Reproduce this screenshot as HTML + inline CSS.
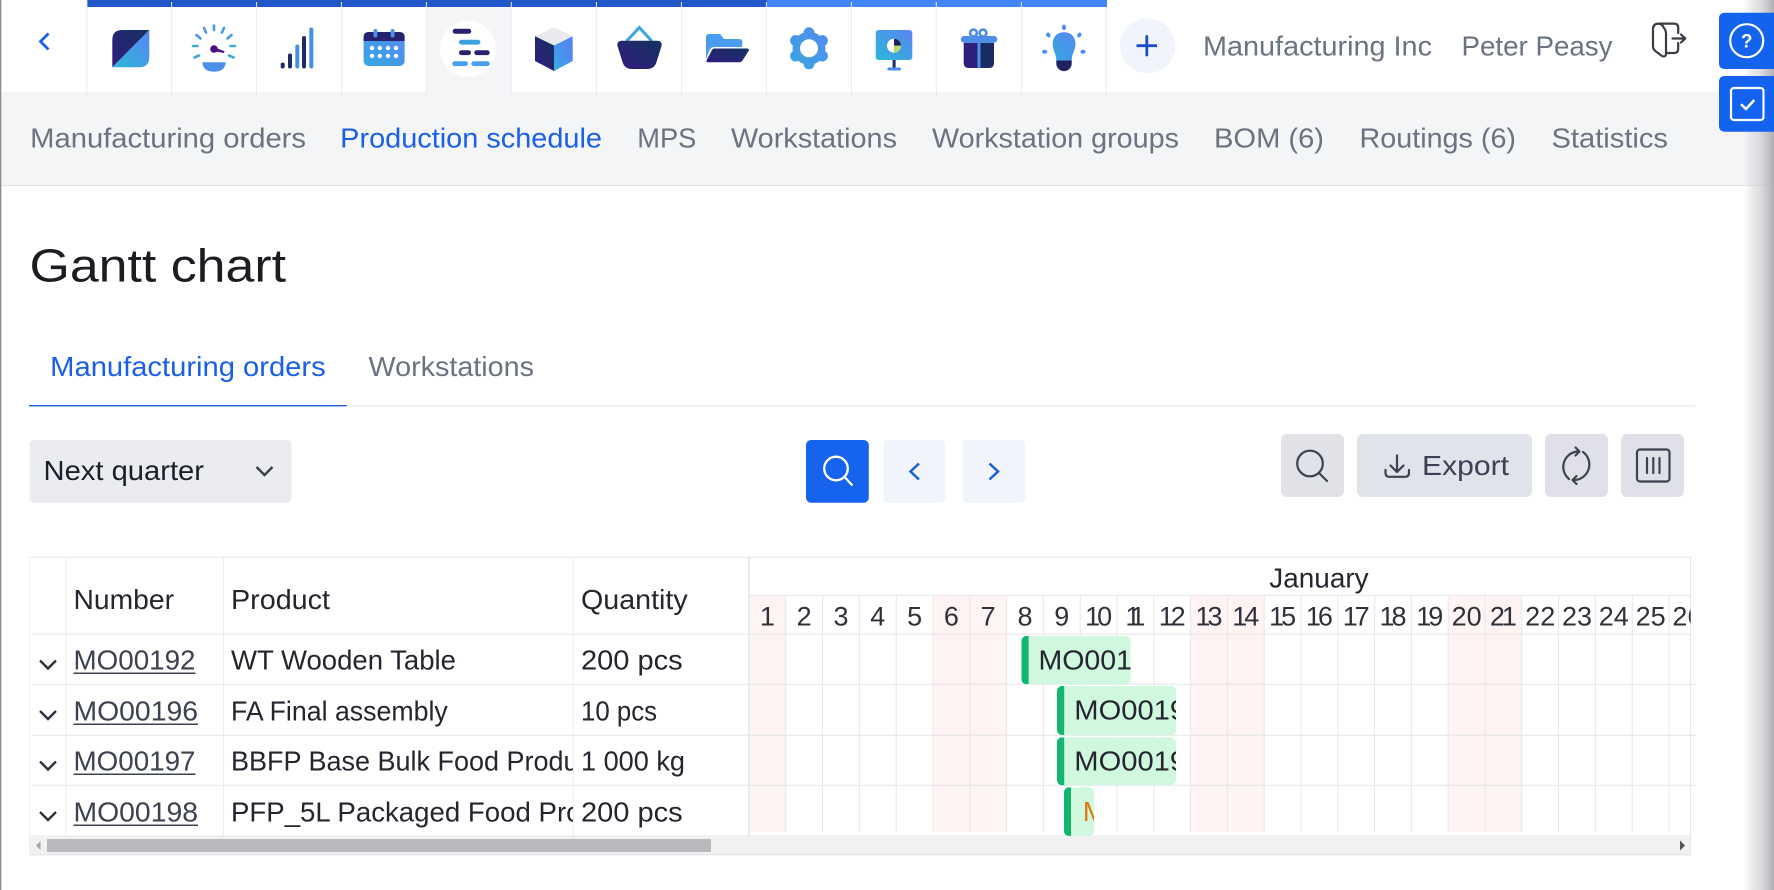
<!DOCTYPE html>
<html lang="en">
<head>
<meta charset="utf-8">
<title>Gantt chart</title>
<style>
html,body{margin:0;padding:0;background:#fff;overflow:hidden}
svg{display:block}
text{font-family:"Liberation Sans",sans-serif;font-size:28px;fill:#23262f}
.n{fill:#6b7280}
.b{fill:#1a5fe8}
.d{text-anchor:middle;font-size:27px;fill:#2e303a}
.l{fill:#3d4150}
</style>
</head>
<body>
<svg xmlns="http://www.w3.org/2000/svg" width="1774" height="890" viewBox="0 0 1774 890">
<defs>
<linearGradient id="g" x1="0" y1="1" x2="1" y2="0"><stop offset="0" stop-color="#2bb8d8"/><stop offset="1" stop-color="#5a84f4"/></linearGradient>
<linearGradient id="g2" x1="0" y1="1" x2="1" y2="0"><stop offset="0" stop-color="#35a8e0"/><stop offset="1" stop-color="#5788f0"/></linearGradient>
<linearGradient id="cube" x1="0" y1="1" x2="1" y2="0"><stop offset="0" stop-color="#34aee0"/><stop offset="0.6" stop-color="#4f8cf0"/><stop offset="1" stop-color="#5880f2"/></linearGradient>
<linearGradient id="gear" gradientUnits="userSpaceOnUse" x1="790" y1="69" x2="828" y2="27"><stop offset="0" stop-color="#35a8e0"/><stop offset="1" stop-color="#5788f0"/></linearGradient>
<linearGradient id="nv" x1="0" y1="1" x2="1" y2="0"><stop offset="0" stop-color="#331c80"/><stop offset="1" stop-color="#12325f"/></linearGradient>
<linearGradient id="sh" x1="0" y1="0" x2="1" y2="0"><stop offset="0" stop-color="#b0b0b4" stop-opacity="0"/><stop offset="0.5" stop-color="#c8c8cb" stop-opacity=".55"/><stop offset="1" stop-color="#aeaeb2"/></linearGradient>
<clipPath id="cProd"><rect x="224" y="634" width="349" height="202"/></clipPath>
<clipPath id="cDays"><rect x="749" y="596" width="941.6" height="38"/></clipPath>
<clipPath id="b1"><rect x="1021.4" y="636" width="109.2" height="48.3" rx="5"/></clipPath>
<clipPath id="b2"><rect x="1057" y="686" width="119" height="49" rx="5"/></clipPath>
<clipPath id="b3"><rect x="1057" y="737.3" width="119" height="48" rx="5"/></clipPath>
<clipPath id="b4"><rect x="1064" y="787.3" width="30" height="48.7" rx="5"/></clipPath>
</defs>

<!-- Page -->
<rect width="1774" height="890" fill="#fff"/>

<!-- Sub-nav background -->
<rect x="0" y="92" width="1774" height="93" fill="#f4f5f7"/>
<rect x="0" y="185" width="1774" height="1" fill="#e6e7ea"/>

<!-- Active tab bg -->
<rect x="426.5" y="7" width="85" height="85" fill="#f4f5f7"/>

<!-- Top colored bars -->
<rect x="87" y="0" width="680" height="7" fill="#2157c8"/>
<rect x="767" y="0" width="340" height="7" fill="#4285f6"/>

<!-- Tab separators -->
<path d="M86.9 0V96M171.6 2V96M256.6 2V96M341.4 2V96M426.4 2V96M511.3 2V96M596.4 2V96M681.4 2V96M766.4 2V96M851.4 2V96M936.3 2V96M1021.3 2V96M1106.3 7V96" stroke="#eaebee" stroke-width="1" fill="none"/>

<!-- Back chevron -->
<path d="M48.5 33.500L40.500 41.500L48.500 49.500" fill="none" stroke="#1a5fe8" stroke-width="2.800"/>

<!-- Icon 1 -->
<path d="M112.3 67.3V40Q112.3 30 122.3 30H149.3L112.3 67.3Z" fill="url(#nv)"/>
<path d="M112.3 67.3L149.3 30V57Q149.3 67.3 139 67.3Z" fill="url(#g)"/>

<!-- Icon 2 gauge -->
<g stroke-width="2.600" stroke-linecap="round" fill="none">
<path d="M214 25.500V30M204 28L206 32.500M224 28L222 32.500M196.500 35L200.500 38.500M231.500 35L227.500 38.500" stroke="#4a9ae8"/>
<path d="M193 46H197.500M235 46H230.500M194.500 57.500L199 55.500M233.500 57.500L229 55.500" stroke="#3eaad8"/>
</g>
<circle cx="214" cy="49" r="3.800" fill="#4a0f85"/>
<path d="M214 47.300L224.500 51.300L224 53L213.500 51Z" fill="#4a0f85"/>
<path d="M202.300 62.300H225.700Q225 71.700 214 71.700Q203 71.700 202.300 62.300Z" fill="#4a8fe8"/>

<!-- Icon 3 bars -->
<g stroke-width="4" stroke-linecap="round" fill="none">
<path d="M282.700 64.500V66.500M290 55.500V66.500M304 38V66.500" stroke="#1f2a66"/>
<path d="M297.300 46.500V66.500M311.300 29.500V66.500" stroke="#4391e4"/>
</g>

<!-- Icon 4 calendar -->
<rect x="363.600" y="32" width="41" height="34" rx="5" fill="url(#g2)"/>
<path d="M363.600 41V37Q363.600 32 368.600 32H399.600Q404.600 32 404.600 37V41Z" fill="#27226e"/>
<rect x="373.400" y="29" width="4" height="8.500" rx="2" fill="#4a90e8"/>
<rect x="390.600" y="29" width="4" height="8.500" rx="2" fill="#4a90e8"/>
<g fill="#fff">
<circle cx="372" cy="48" r="2.200"/><circle cx="379.800" cy="48" r="2.200"/><circle cx="388" cy="48" r="2.200"/><circle cx="396" cy="48" r="2.200"/>
<circle cx="372" cy="56" r="2.200"/><circle cx="379.800" cy="56" r="2.200"/><circle cx="388" cy="56" r="2.200"/><circle cx="396" cy="56" r="2.200"/>
</g>

<!-- Icon 5 (active) -->
<circle cx="468" cy="48.700" r="28" fill="#fff"/>
<rect x="452.700" y="28.700" width="18.500" height="5" rx="2.500" fill="#27226e"/>
<rect x="459" y="39.800" width="21.400" height="4.800" rx="2.400" fill="#3ba2e0"/>
<rect x="459" y="50.300" width="12" height="4.800" rx="2.400" fill="#27226e"/>
<rect x="474.300" y="50.300" width="15.400" height="4.800" rx="2.400" fill="#27226e"/>
<rect x="452.300" y="61.300" width="15.700" height="4.800" rx="2.400" fill="#4aa0ee"/>
<rect x="471.300" y="61.300" width="18.400" height="4.800" rx="2.400" fill="#4aa0ee"/>

<!-- Icon 6 cube -->
<path d="M554 27.300L572.700 36.300L554 45.500L535 36.300Z" fill="#e9eaee"/>
<path d="M535 36.300L554 45.500V71L535 61Z" fill="url(#nv)"/>
<path d="M554 45.500L572.700 36.300V61L554 71Z" fill="url(#cube)"/>

<!-- Icon 7 basket -->
<path d="M626.700 41L639.300 27.500L651.700 41" fill="none" stroke="#3ca4e0" stroke-width="3"/>
<path d="M622 40.700H657Q662.500 40.700 661.500 46L656.500 62Q654.500 69 647 69H632Q624.500 69 622.500 62L617.500 46Q616.500 40.700 622 40.700Z" fill="url(#nv)"/>

<!-- Icon 8 folder -->
<path d="M706 37Q706 34 709 34H720L724 39H739Q742.300 39 742.300 42V47H714Q711 47 709.500 50L706 59Z" fill="#4a9cee"/>
<path d="M714 48.500H747Q749.800 48.500 748.500 51L742.500 60.500Q741.300 62.300 739 62.300H708Q705.700 62.300 706.700 60L712 50Q712.800 48.500 714 48.500Z" fill="url(#nv)"/>

<!-- Icon 9 gear -->
<g fill="url(#gear)">
<circle cx="809" cy="48.300" r="16.500"/>
<circle cx="809" cy="32.800" r="5.500"/>
<circle cx="809" cy="63.800" r="5.500"/>
<circle cx="795.600" cy="40.600" r="5.500"/>
<circle cx="822.400" cy="40.600" r="5.500"/>
<circle cx="795.600" cy="56" r="5.500"/>
<circle cx="822.400" cy="56" r="5.500"/>
</g>
<circle cx="809" cy="48.300" r="9" fill="#fff"/>

<!-- Icon 10 presentation -->
<rect x="875.700" y="30" width="36.600" height="30" rx="3" fill="url(#g)"/>
<circle cx="894" cy="45.700" r="7" fill="#fff"/>
<path d="M894 45.700V38.700A7 7 0 0 1 901 45.700Z" fill="#1a2458"/>
<path d="M894 45.700H901A7 7 0 0 1 894 52.700Z" fill="#b8dc6c"/>
<rect x="892.600" y="60" width="3" height="8" fill="#1d2a66"/>
<rect x="887.300" y="67.500" width="13.700" height="3" rx="1.500" fill="#4a90e8"/>

<!-- Icon 11 gift -->
<circle cx="973.500" cy="33" r="3.400" fill="none" stroke="#4f8ee8" stroke-width="2.600"/>
<circle cx="983" cy="33" r="3.400" fill="none" stroke="#4f8ee8" stroke-width="2.600"/>
<path d="M963.700 42.700H978V68H969Q963.700 68 963.700 63Z" fill="#2f1f7a"/>
<path d="M980 42.700H994V63Q994 68 989 68H980Z" fill="#172c63"/>
<rect x="977.500" y="42" width="3" height="26" fill="#4a90e8"/>
<rect x="960.700" y="36" width="36.600" height="6.800" rx="3.400" fill="#4f8ee8"/>

<!-- Icon 12 bulb -->
<path d="M1064 32.300C1071.500 32.300 1075.500 37.500 1075.500 44C1075.500 50 1072 53 1071.700 60.500H1056.300C1056 53 1052.700 50 1052.700 44C1052.700 37.500 1056.500 32.300 1064 32.300Z" fill="url(#g2)"/>
<path d="M1056.300 60.500H1071.700V63.500A7.700 7.700 0 0 1 1056.300 63.500Z" fill="#1f1f62"/>
<g fill="#4f8ee8">
<ellipse cx="1064" cy="27.300" rx="2" ry="2.800"/>
<ellipse cx="1048.300" cy="35" rx="2" ry="2.600" transform="rotate(-35 1048.300 35)"/>
<ellipse cx="1079.300" cy="35" rx="2" ry="2.600" transform="rotate(35 1079.300 35)"/>
<ellipse cx="1044.700" cy="51.700" rx="2.600" ry="2"/>
<ellipse cx="1083" cy="51.700" rx="2.600" ry="2"/>
</g>

<!-- Plus -->
<circle cx="1147.600" cy="45.700" r="27.500" fill="#f2f4fc"/>
<path d="M1136.500 45.700H1157M1146.800 35.200V56.200" stroke="#1a50c4" stroke-width="2.800" fill="none"/>

<!-- Header text -->
<text x="1203" y="55.500" class="n" textLength="229" lengthAdjust="spacingAndGlyphs">Manufacturing Inc</text>
<text x="1461.500" y="55.500" class="n" textLength="151" lengthAdjust="spacingAndGlyphs">Peter Peasy</text>

<!-- Logout -->
<g fill="none" stroke="#3a3b45" stroke-width="2.200" stroke-linejoin="round" stroke-linecap="round">
<path d="M1660 23.600H1674Q1678.200 23.600 1678.200 27.500V33M1678.200 43V49Q1678.200 53 1674 53H1667"/>
<path d="M1653 29Q1653 23.600 1659 23.600Q1662 24 1664 28Q1666 30.500 1666 33.500V53.500Q1666 57.500 1662 56L1656 51.500Q1653 49.500 1653 46.500Z"/>
<path d="M1672.500 38.500H1685M1681 34.500L1685.300 38.500L1681 42.500"/>
</g>

<!-- Sub-nav text -->
<text x="30.200" y="147.500" class="n" textLength="275.800" lengthAdjust="spacingAndGlyphs">Manufacturing orders</text>
<text x="340.200" y="147.500" class="b" textLength="261.800" lengthAdjust="spacingAndGlyphs">Production schedule</text>
<text x="637.300" y="147.500" class="n" textLength="59" lengthAdjust="spacingAndGlyphs">MPS</text>
<text x="731" y="147.500" class="n" textLength="166" lengthAdjust="spacingAndGlyphs">Workstations</text>
<text x="932" y="147.500" class="n" textLength="247" lengthAdjust="spacingAndGlyphs">Workstation groups</text>
<text x="1214" y="147.500" class="n" textLength="110" lengthAdjust="spacingAndGlyphs">BOM (6)</text>
<text x="1359.500" y="147.500" class="n" textLength="156.500" lengthAdjust="spacingAndGlyphs">Routings (6)</text>
<text x="1551.500" y="147.500" class="n" textLength="116.500" lengthAdjust="spacingAndGlyphs">Statistics</text>

<!-- Title -->
<text x="29.500" y="281.700" style="font-size:46px;fill:#1c1d22" textLength="256.500" lengthAdjust="spacingAndGlyphs">Gantt chart</text>

<!-- Tabs -->
<text x="50.200" y="376" class="b" textLength="275.500" lengthAdjust="spacingAndGlyphs">Manufacturing orders</text>
<text x="368.500" y="376" class="n" textLength="165.500" lengthAdjust="spacingAndGlyphs">Workstations</text>
<rect x="29" y="405.300" width="1666" height="1" fill="#e2e3e7"/>
<rect x="29" y="405" width="317.700" height="1.400" fill="#1f63d8"/>

<!-- Select -->
<rect x="29.500" y="440" width="262" height="62.700" rx="4" fill="#ebecf0"/>
<text x="43.500" y="480" style="fill:#1c1f2a" textLength="160.500" lengthAdjust="spacingAndGlyphs">Next quarter</text>
<path d="M256.500 467L264.500 475L272.500 467" fill="none" stroke="#3a3f4c" stroke-width="2.400"/>

<!-- Center buttons -->
<rect x="806" y="440" width="62.800" height="62.700" rx="5" fill="#1663ee"/>
<circle cx="836" cy="468.500" r="11.800" fill="none" stroke="#fff" stroke-width="2.300"/>
<path d="M844.500 477L852.500 485.500" stroke="#fff" stroke-width="2.300"/>
<rect x="883.400" y="440" width="62" height="62.700" rx="4" fill="#f2f4fc"/>
<path d="M919 463.500L910.500 471.500L919 479.500" fill="none" stroke="#1a5fd8" stroke-width="2.500"/>
<rect x="962.500" y="440" width="62.900" height="62.700" rx="4" fill="#f2f4fc"/>
<path d="M989.500 463.500L998 471.500L989.500 479.500" fill="none" stroke="#1a5fd8" stroke-width="2.500"/>

<!-- Right buttons -->
<rect x="1281" y="434" width="63" height="63" rx="6" fill="#e1e2e7"/>
<rect x="1357" y="434" width="175" height="63" rx="6" fill="#e0e3ea"/>
<rect x="1545" y="434" width="63" height="63" rx="6" fill="#e0e1e8"/>
<rect x="1621" y="434" width="63" height="63" rx="6" fill="#e0e1e8"/>
<g fill="none" stroke="#3e4250" stroke-width="2.200" stroke-linecap="round" stroke-linejoin="round">
<circle cx="1310" cy="463.500" r="12.800"/>
<path d="M1319 473L1327 481"/>
<path d="M1397 455.500V472M1390.500 465.500L1397 472L1403.500 465.500M1385.500 470V473Q1385.500 476.800 1389.500 476.800H1405Q1409 476.800 1409 473V470"/>
<path d="M1578 451.500A15.500 15.500 0 0 0 1569 479M1574 480A15.500 15.500 0 0 0 1583 452"/>
<path d="M1575.500 447.500L1579.500 451.500L1575.500 455.500M1576.500 476L1572.500 480L1576.500 484"/>
<rect x="1637" y="449.500" width="32.500" height="32" rx="3"/>
<path d="M1647 458V473M1653.300 458V473M1659.500 458V473"/>
</g>
<text x="1422" y="475" style="fill:#3b4253" textLength="87" lengthAdjust="spacingAndGlyphs">Export</text>

<!-- Table: weekend shading -->
<g fill="#fff3f3">
<rect x="749" y="596" width="36.800" height="236"/>
<rect x="933" y="596" width="73.600" height="236"/>
<rect x="1190.600" y="596" width="73.600" height="236"/>
<rect x="1448.200" y="596" width="73.600" height="236"/>
</g>

<!-- Table grid -->
<path d="M785.800 596V832M822.600 596V832M859.400 596V832M896.200 596V832M933 596V832M969.800 596V832M1006.600 596V832M1043.400 596V832M1080.200 596V832M1117 596V832M1153.800 596V832M1190.600 596V832M1227.400 596V832M1264.200 596V832M1301 596V832M1337.800 596V832M1374.600 596V832M1411.400 596V832M1448.200 596V832M1485 596V832M1521.800 596V832M1558.600 596V832M1595.400 596V832M1632.200 596V832M1669 596V832" stroke="#e7e7ea" stroke-width="1" fill="none"/>
<path d="M29.500 557.300H1690.600M749 595.300H1690.600M32 634.300H1690.600M32 684.300H1696M32 735.300H1696M32 785.300H1696M29.500 836H1690.600" stroke="#e4e5e8" stroke-width="1" fill="none"/>
<path d="M66 557V836M223.500 557V836M573.300 557V836" stroke="#ebecee" stroke-width="1" fill="none"/>
<path d="M29.500 557V855" stroke="#f0f0f3" stroke-width="1" fill="none"/>
<path d="M749 557V836" stroke="#e6e6ea" stroke-width="1.500" fill="none"/>
<path d="M1690.600 557V855" stroke="#e6e6ea" stroke-width="1" fill="none"/>

<!-- Table header -->
<text x="73.500" y="609" textLength="100.500" lengthAdjust="spacingAndGlyphs">Number</text>
<text x="231" y="609" textLength="99" lengthAdjust="spacingAndGlyphs">Product</text>
<text x="581" y="609" textLength="106.700" lengthAdjust="spacingAndGlyphs">Quantity</text>
<text x="1269.300" y="587.700" textLength="99.300" lengthAdjust="spacingAndGlyphs">January</text>

<!-- Days -->
<g clip-path="url(#cDays)">
<text class="d" x="767.400" y="625.700">1</text>
<text class="d" x="804.200" y="625.700">2</text>
<text class="d" x="841" y="625.700">3</text>
<text class="d" x="877.800" y="625.700">4</text>
<text class="d" x="914.600" y="625.700">5</text>
<text class="d" x="951.400" y="625.700">6</text>
<text class="d" x="988.200" y="625.700">7</text>
<text class="d" x="1025" y="625.700">8</text>
<text class="d" x="1061.800" y="625.700">9</text>
<text class="d" x="1098.600" y="625.700" textLength="27" lengthAdjust="spacing">10</text>
<text class="d" x="1135.400" y="625.700" textLength="20" lengthAdjust="spacing">11</text>
<text class="d" x="1172.200" y="625.700" textLength="27" lengthAdjust="spacing">12</text>
<text class="d" x="1209" y="625.700" textLength="27" lengthAdjust="spacing">13</text>
<text class="d" x="1245.800" y="625.700" textLength="27" lengthAdjust="spacing">14</text>
<text class="d" x="1282.600" y="625.700" textLength="27" lengthAdjust="spacing">15</text>
<text class="d" x="1319.400" y="625.700" textLength="27" lengthAdjust="spacing">16</text>
<text class="d" x="1356.200" y="625.700" textLength="27" lengthAdjust="spacing">17</text>
<text class="d" x="1393" y="625.700" textLength="27" lengthAdjust="spacing">18</text>
<text class="d" x="1429.800" y="625.700" textLength="27" lengthAdjust="spacing">19</text>
<text class="d" x="1466.600" y="625.700">20</text>
<text class="d" x="1503.400" y="625.700" textLength="27" lengthAdjust="spacing">21</text>
<text class="d" x="1540.200" y="625.700">22</text>
<text class="d" x="1577" y="625.700">23</text>
<text class="d" x="1613.800" y="625.700">24</text>
<text class="d" x="1650.600" y="625.700">25</text>
<text class="d" x="1687.400" y="625.700">26</text>
</g>

<!-- Row chevrons -->
<g fill="none" stroke="#2e323e" stroke-width="2.400">
<path d="M40 660.500L48 668.500L56 660.500"/>
<path d="M40 711L48 719L56 711"/>
<path d="M40 761.500L48 769.500L56 761.500"/>
<path d="M40 812L48 820L56 812"/>
</g>

<!-- Row links -->
<text x="73.500" y="669.500" class="l" textLength="122" lengthAdjust="spacingAndGlyphs">MO00192</text>
<rect x="73.500" y="672.500" width="122" height="1.500" fill="#3d4150"/>
<text x="73.500" y="720.700" class="l" textLength="124.500" lengthAdjust="spacingAndGlyphs">MO00196</text>
<rect x="73.500" y="723.500" width="124.500" height="1.500" fill="#3d4150"/>
<text x="73.500" y="770.700" class="l" textLength="122" lengthAdjust="spacingAndGlyphs">MO00197</text>
<rect x="73.500" y="773.500" width="122" height="1.500" fill="#3d4150"/>
<text x="73.500" y="821.700" class="l" textLength="124.500" lengthAdjust="spacingAndGlyphs">MO00198</text>
<rect x="73.500" y="824.500" width="124.500" height="1.500" fill="#3d4150"/>

<!-- Products -->
<g clip-path="url(#cProd)">
<text x="231" y="669.500" textLength="225" lengthAdjust="spacingAndGlyphs">WT Wooden Table</text>
<text x="231" y="720.700" textLength="216.800" lengthAdjust="spacingAndGlyphs">FA Final assembly</text>
<text x="231" y="770.700" textLength="347.500" lengthAdjust="spacingAndGlyphs">BBFP Base Bulk Food Produ</text>
<text x="231" y="821.700" textLength="350.500" lengthAdjust="spacingAndGlyphs">PFP_5L Packaged Food Pro</text>
</g>

<!-- Quantities -->
<text x="581" y="669.500" textLength="101.600" lengthAdjust="spacingAndGlyphs">200 pcs</text>
<text x="581" y="720.700" textLength="76" lengthAdjust="spacingAndGlyphs">10 pcs</text>
<text x="581" y="770.700" textLength="104" lengthAdjust="spacingAndGlyphs">1 000 kg</text>
<text x="581" y="821.700" textLength="101.600" lengthAdjust="spacingAndGlyphs">200 pcs</text>

<!-- Gantt bars -->
<g clip-path="url(#b1)">
<rect x="1021.400" y="636" width="109.200" height="48.300" fill="#d0f8de"/>
<rect x="1021.400" y="636" width="7.200" height="48.300" fill="#12b76f"/>
<text x="1038.500" y="669.500" textLength="93.500" lengthAdjust="spacingAndGlyphs">MO001</text>
</g>
<g clip-path="url(#b2)">
<rect x="1057" y="686" width="119" height="49" fill="#d0f8de"/>
<rect x="1057" y="686" width="7.200" height="49" fill="#12b76f"/>
<text x="1074.300" y="719.300" textLength="128" lengthAdjust="spacingAndGlyphs">MO00196</text>
</g>
<g clip-path="url(#b3)">
<rect x="1057" y="737.300" width="119" height="48" fill="#d0f8de"/>
<rect x="1057" y="737.300" width="7.200" height="48" fill="#12b76f"/>
<text x="1074.300" y="770.500" textLength="128" lengthAdjust="spacingAndGlyphs">MO00197</text>
</g>
<g clip-path="url(#b4)">
<rect x="1064" y="787.300" width="30" height="48.700" fill="#d0f8de"/>
<rect x="1064" y="787.300" width="7" height="48.700" fill="#12b76f"/>
<text x="1082.700" y="821" style="fill:#e07a10">MO00198</text>
</g>

<!-- Scrollbar -->
<rect x="30" y="837" width="1660" height="17.500" fill="#f1f1f2"/>
<rect x="29.500" y="854.300" width="1661" height="1" fill="#e2e2e5"/>
<rect x="47" y="839" width="664" height="13" fill="#b9b8bc"/>
<path d="M40.500 841L36 845.500L40.500 850Z" fill="#a5a5a9"/>
<path d="M1680 840.500L1685 845.500L1680 850.500Z" fill="#555"/>

<!-- Left edge -->
<rect x="0" y="0" width="1.300" height="890" fill="#8c8c8c"/>

<!-- Right shadow -->
<rect x="1744" y="0" width="30" height="890" fill="url(#sh)"/>

<!-- Floating tabs -->
<path d="M1774 12.700H1725Q1719 12.700 1719 18.700V63Q1719 69 1725 69H1774Z" fill="#1463ee"/>
<path d="M1774 76H1725Q1719 76 1719 82V125.700Q1719 131.700 1725 131.700H1774Z" fill="#1463ee"/>
<circle cx="1746.700" cy="40.700" r="16.500" fill="none" stroke="#fff" stroke-width="2.200"/>
<text x="1746.700" y="47.500" text-anchor="middle" style="font-size:19px;font-weight:bold;fill:#fff">?</text>
<rect x="1731" y="88" width="32.500" height="32" rx="3" fill="none" stroke="#fff" stroke-width="2.200"/>
<path d="M1741 104.300L1746 109L1754.300 100" fill="none" stroke="#fff" stroke-width="2.400"/>
</svg>
</body>
</html>
